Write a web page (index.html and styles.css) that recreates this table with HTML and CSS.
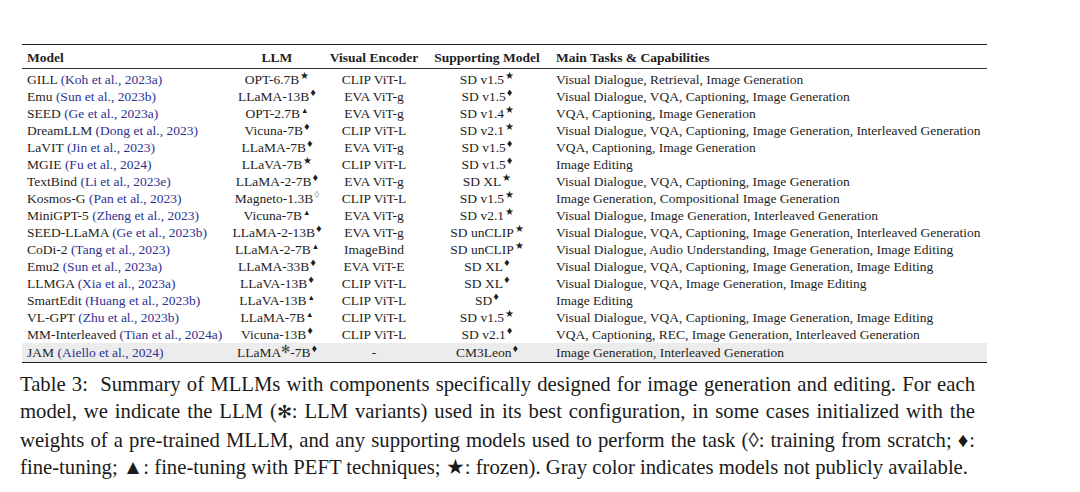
FILE: index.html
```html
<!DOCTYPE html>
<html>
<head>
<meta charset="utf-8">
<link rel="stylesheet" href="styles.css">
</head>
<body>
<div class="page">
  <table class="tbl">
    <colgroup>
      <col class="c1"><col class="c2"><col class="c3"><col class="c4"><col class="c5">
    </colgroup>
    <thead>
      <tr><th class="l">Model</th><th>LLM</th><th>Visual Encoder</th><th>Supporting Model</th><th class="l">Main Tasks &amp; Capabilities</th></tr>
    </thead>
    <tbody>
      <tr class="first"><td class="l">GILL <span class="cite">(Koh et al., 2023a)</span></td><td>OPT-6.7B<sup class="s">★</sup></td><td>CLIP ViT-L</td><td>SD v1.5<sup class="s">★</sup></td><td class="l">Visual Dialogue, Retrieval, Image Generation</td></tr>
      <tr><td class="l">Emu <span class="cite">(Sun et al., 2023b)</span></td><td>LLaMA-13B<sup class="d">♦</sup></td><td>EVA ViT-g</td><td>SD v1.5<sup class="d">♦</sup></td><td class="l">Visual Dialogue, VQA, Captioning, Image Generation</td></tr>
      <tr><td class="l">SEED <span class="cite">(Ge et al., 2023a)</span></td><td>OPT-2.7B<sup class="t">▲</sup></td><td>EVA ViT-g</td><td>SD v1.4<sup class="s">★</sup></td><td class="l">VQA, Captioning, Image Generation</td></tr>
      <tr><td class="l">DreamLLM <span class="cite">(Dong et al., 2023)</span></td><td>Vicuna-7B<sup class="d">♦</sup></td><td>CLIP ViT-L</td><td>SD v2.1<sup class="s">★</sup></td><td class="l">Visual Dialogue, VQA, Captioning, Image Generation, Interleaved Generation</td></tr>
      <tr><td class="l">LaVIT <span class="cite">(Jin et al., 2023)</span></td><td>LLaMA-7B<sup class="d">♦</sup></td><td>EVA ViT-g</td><td>SD v1.5<sup class="d">♦</sup></td><td class="l">VQA, Captioning, Image Generation</td></tr>
      <tr><td class="l">MGIE <span class="cite">(Fu et al., 2024)</span></td><td>LLaVA-7B<sup class="s">★</sup></td><td>CLIP ViT-L</td><td>SD v1.5<sup class="d">♦</sup></td><td class="l">Image Editing</td></tr>
      <tr><td class="l">TextBind <span class="cite">(Li et al., 2023e)</span></td><td>LLaMA-2-7B<sup class="d">♦</sup></td><td>EVA ViT-g</td><td>SD XL<sup class="s">★</sup></td><td class="l">Visual Dialogue, VQA, Captioning, Image Generation</td></tr>
      <tr><td class="l">Kosmos-G <span class="cite">(Pan et al., 2023)</span></td><td>Magneto-1.3B<sup class="o">◊</sup></td><td>CLIP ViT-L</td><td>SD v1.5<sup class="s">★</sup></td><td class="l">Image Generation, Compositional Image Generation</td></tr>
      <tr><td class="l">MiniGPT-5 <span class="cite">(Zheng et al., 2023)</span></td><td>Vicuna-7B<sup class="t">▲</sup></td><td>EVA ViT-g</td><td>SD v2.1<sup class="s">★</sup></td><td class="l">Visual Dialogue, Image Generation, Interleaved Generation</td></tr>
      <tr><td class="l">SEED-LLaMA <span class="cite">(Ge et al., 2023b)</span></td><td>LLaMA-2-13B<sup class="d">♦</sup></td><td>EVA ViT-g</td><td>SD unCLIP<sup class="s">★</sup></td><td class="l">Visual Dialogue, VQA, Captioning, Image Generation, Interleaved Generation</td></tr>
      <tr><td class="l">CoDi-2 <span class="cite">(Tang et al., 2023)</span></td><td>LLaMA-2-7B<sup class="t">▲</sup></td><td>ImageBind</td><td>SD unCLIP<sup class="s">★</sup></td><td class="l">Visual Dialogue, Audio Understanding, Image Generation, Image Editing</td></tr>
      <tr><td class="l">Emu2 <span class="cite">(Sun et al., 2023a)</span></td><td>LLaMA-33B<sup class="d">♦</sup></td><td>EVA ViT-E</td><td>SD XL<sup class="d">♦</sup></td><td class="l">Visual Dialogue, VQA, Captioning, Image Generation, Image Editing</td></tr>
      <tr><td class="l">LLMGA <span class="cite">(Xia et al., 2023a)</span></td><td>LLaVA-13B<sup class="d">♦</sup></td><td>CLIP ViT-L</td><td>SD XL<sup class="d">♦</sup></td><td class="l">Visual Dialogue, VQA, Image Generation, Image Editing</td></tr>
      <tr><td class="l">SmartEdit <span class="cite">(Huang et al., 2023b)</span></td><td>LLaVA-13B<sup class="t">▲</sup></td><td>CLIP ViT-L</td><td>SD<sup class="d">♦</sup></td><td class="l">Image Editing</td></tr>
      <tr><td class="l">VL-GPT <span class="cite">(Zhu et al., 2023b)</span></td><td>LLaMA-7B<sup class="t">▲</sup></td><td>CLIP ViT-L</td><td>SD v1.5<sup class="s">★</sup></td><td class="l">Visual Dialogue, VQA, Captioning, Image Generation, Image Editing</td></tr>
      <tr><td class="l">MM-Interleaved <span class="cite">(Tian et al., 2024a)</span></td><td>Vicuna-13B<sup class="d">♦</sup></td><td>CLIP ViT-L</td><td>SD v2.1<sup class="d">♦</sup></td><td class="l">VQA, Captioning, REC, Image Generation, Interleaved Generation</td></tr>
      <tr class="gray last"><td class="l">JAM <span class="cite">(Aiello et al., 2024)</span></td><td>LLaMA<sup class="a">✻</sup>-7B<sup class="d">♦</sup></td><td>-</td><td>CM3Leon<sup class="d">♦</sup></td><td class="l">Image Generation, Interleaved Generation</td></tr>
    </tbody>
  </table>
  <div class="caption">
    <span class="line">Table 3:&nbsp; Summary of MLLMs with components specifically designed for image generation and editing. For each</span>
    <span class="line">model, we indicate the LLM (<span class="ast">✻</span>: LLM variants) used in its best configuration, in some cases initialized with the</span>
    <span class="line">weights of a pre-trained MLLM, and any supporting models used to perform the task (◊: training from scratch; ♦:</span>
    <span class="line end">fine-tuning; ▲: fine-tuning with PEFT techniques; ★: frozen). Gray color indicates models not publicly available.</span>
  </div>
</div>
</body>
</html>
```

FILE: styles.css
```css
html, body {
  margin: 0;
  padding: 0;
  background: #ffffff;
}
body {
  font-family: "Liberation Serif", "Times New Roman", serif;
  color: #1e1e1e;
}
.page {
  padding: 44px 0 0 22px;
  width: 965px;
}
.tbl {
  width: 965px;
  border-collapse: collapse;
  table-layout: fixed;
  font-size: 13.5px;
  line-height: 17px;
}
.c1 { width: 208px; }
.c2 { width: 94px; }
.c3 { width: 100px; }
.c4 { width: 126px; }
.c5 { width: 437px; }
.tbl th, .tbl td {
  padding: 0 2px;
  text-align: center;
  white-space: nowrap;
  vertical-align: middle;
}
.tbl th.l, .tbl td.l {
  text-align: left;
  padding-left: 5px;
}
.tbl td.l:last-child, .tbl th.l:last-child {
  padding-left: 6px;
}
.tbl thead tr {
  border-top: 1.6px solid #222;
  border-bottom: 1px solid #333;
}
.tbl th {
  font-weight: bold;
  height: 22px;
  padding-top: 1px;
}
.tbl tbody tr.first td {
  padding-top: 2px;
}
.tbl tbody tr.last {
  border-bottom: 1.6px solid #222;
}
.tbl tbody tr.last td {
  padding-top: 1px;
  padding-bottom: 1px;
}
.tbl tr.gray td {
  background: #ececec;
}
.cite {
  color: #2e3192;
}
sup {
  font-size: 8px;
  line-height: 0;
  vertical-align: 5px;
  margin-left: 1px;
}
sup.s { font-size: 10px; }
sup.d { font-size: 11px; }
sup.t { font-size: 7.5px; }
sup.o { font-size: 10px; color: #999; }
sup.a { font-size: 11px; color: #444; margin-left: 0; vertical-align: 4px; }
.caption {
  margin-top: 8px;
  width: 955px;
  margin-left: -2px;
  font-size: 20.7px;
  line-height: 27.3px;
  color: #1a1a1a;
}
.caption .line {
  display: block;
  text-align: justify;
  text-align-last: justify;
  white-space: nowrap;
}
.caption .line.end {
  text-align-last: left;
}
.ast {
  font-size: 18px;
}
```
